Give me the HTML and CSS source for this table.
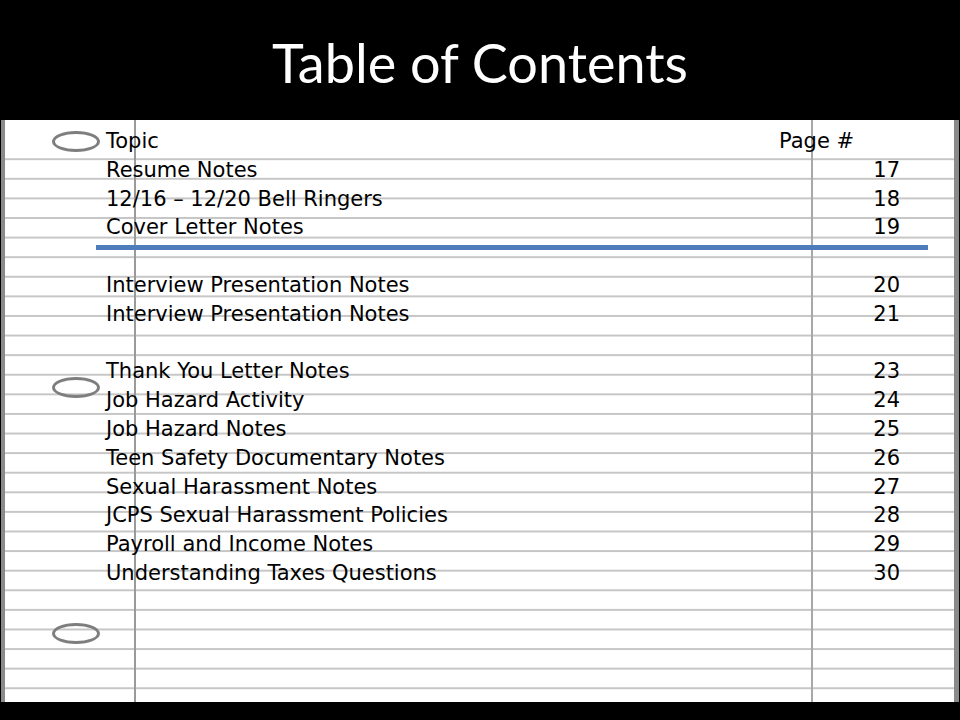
FILE: index.html
```
<!DOCTYPE html>
<html lang="en">
<head>
<meta charset="utf-8">
<title>Table of Contents</title>
<link rel="stylesheet" href="styles.css">
</head>
<body>
<div class="slide">
  <header class="title-bar">
    <h1 class="title">Table of Contents</h1>
  </header>
  <main class="paper">
    <span class="hole hole-1"></span>
    <span class="hole hole-2"></span>
    <span class="hole hole-3"></span>
    <span class="divider"></span>
    <div class="toc">
      <div class="topic">Topic</div><div class="page head">Page #</div>
      <div class="topic">Resume Notes</div><div class="page">17</div>
      <div class="topic">12/16 – 12/20 Bell Ringers</div><div class="page">18</div>
      <div class="topic">Cover Letter Notes</div><div class="page">19</div>
      <div class="topic blank">&nbsp;</div><div class="page"></div>
      <div class="topic">Interview Presentation Notes</div><div class="page">20</div>
      <div class="topic">Interview Presentation Notes</div><div class="page">21</div>
      <div class="topic blank">&nbsp;</div><div class="page"></div>
      <div class="topic">Thank You Letter Notes</div><div class="page">23</div>
      <div class="topic">Job Hazard Activity</div><div class="page">24</div>
      <div class="topic">Job Hazard Notes</div><div class="page">25</div>
      <div class="topic">Teen Safety Documentary Notes</div><div class="page">26</div>
      <div class="topic">Sexual Harassment Notes</div><div class="page">27</div>
      <div class="topic">JCPS Sexual Harassment Policies</div><div class="page">28</div>
      <div class="topic">Payroll and Income Notes</div><div class="page">29</div>
      <div class="topic">Understanding Taxes Questions</div><div class="page">30</div>
    </div>
  </main>
  <footer class="bottom-bar"></footer>
</div>
</body>
</html>
```
FILE: styles.css
```
html, body {
  margin: 0;
  padding: 0;
  background: #000;
}

.slide {
  width: 960px;
  height: 720px;
  display: flex;
  flex-direction: column;
  background: #000;
  overflow: hidden;
}

.title-bar {
  height: 120px;
  flex: 0 0 120px;
  background: #000;
  display: flex;
  align-items: center;
  justify-content: center;
  box-sizing: border-box;
  padding-top: 4px;
}

.title {
  margin: 0;
  font-family: Lato, "Open Sans", sans-serif;
  font-weight: 400;
  font-size: 54px;
  color: #fff;
  letter-spacing: 0;
}

.paper {
  flex: 0 0 582px;
  height: 582px;
  margin: 0 1px;
  border-left: 4px solid #8a8a8a;
  border-right: 5px solid #8a8a8a;
  position: relative;
  background:
    linear-gradient(to right, transparent 129px, #9a9a9a 129px, #9a9a9a 131px, transparent 131px),
    linear-gradient(to right, transparent 806px, #a8a8a8 806px, #a8a8a8 808px, transparent 808px),
    linear-gradient(#fff, #fff) 0 0 / 100% 37px no-repeat,
    repeating-linear-gradient(to bottom, transparent 0, transparent 17.6px, #c6c6c6 17.6px, #c6c6c6 19.6px) 0 1px / 100% 19.6px,
    #fff;
}

.hole {
  position: absolute;
  left: 47px;
  width: 48px;
  height: 21px;
  box-sizing: border-box;
  border: 3px solid #7e7e7e;
  border-radius: 50%;
}

.hole-1 { top: 11px; }
.hole-2 { top: 257px; }
.hole-3 { top: 503px; }

.divider {
  position: absolute;
  left: 91px;
  top: 125px;
  width: 832px;
  height: 5px;
  background: #4e7dbd;
}

.toc {
  display: grid;
  grid-template-columns: 673px 121px;
  padding: 7px 0 0 101px;
  font-family: "DejaVu Sans", sans-serif;
  font-size: 21px;
  line-height: 28.8px;
  color: #000;
  position: relative;
}

.topic {
  white-space: nowrap;
}

.page {
  text-align: right;
}

.page.head {
  text-align: left;
}
```
